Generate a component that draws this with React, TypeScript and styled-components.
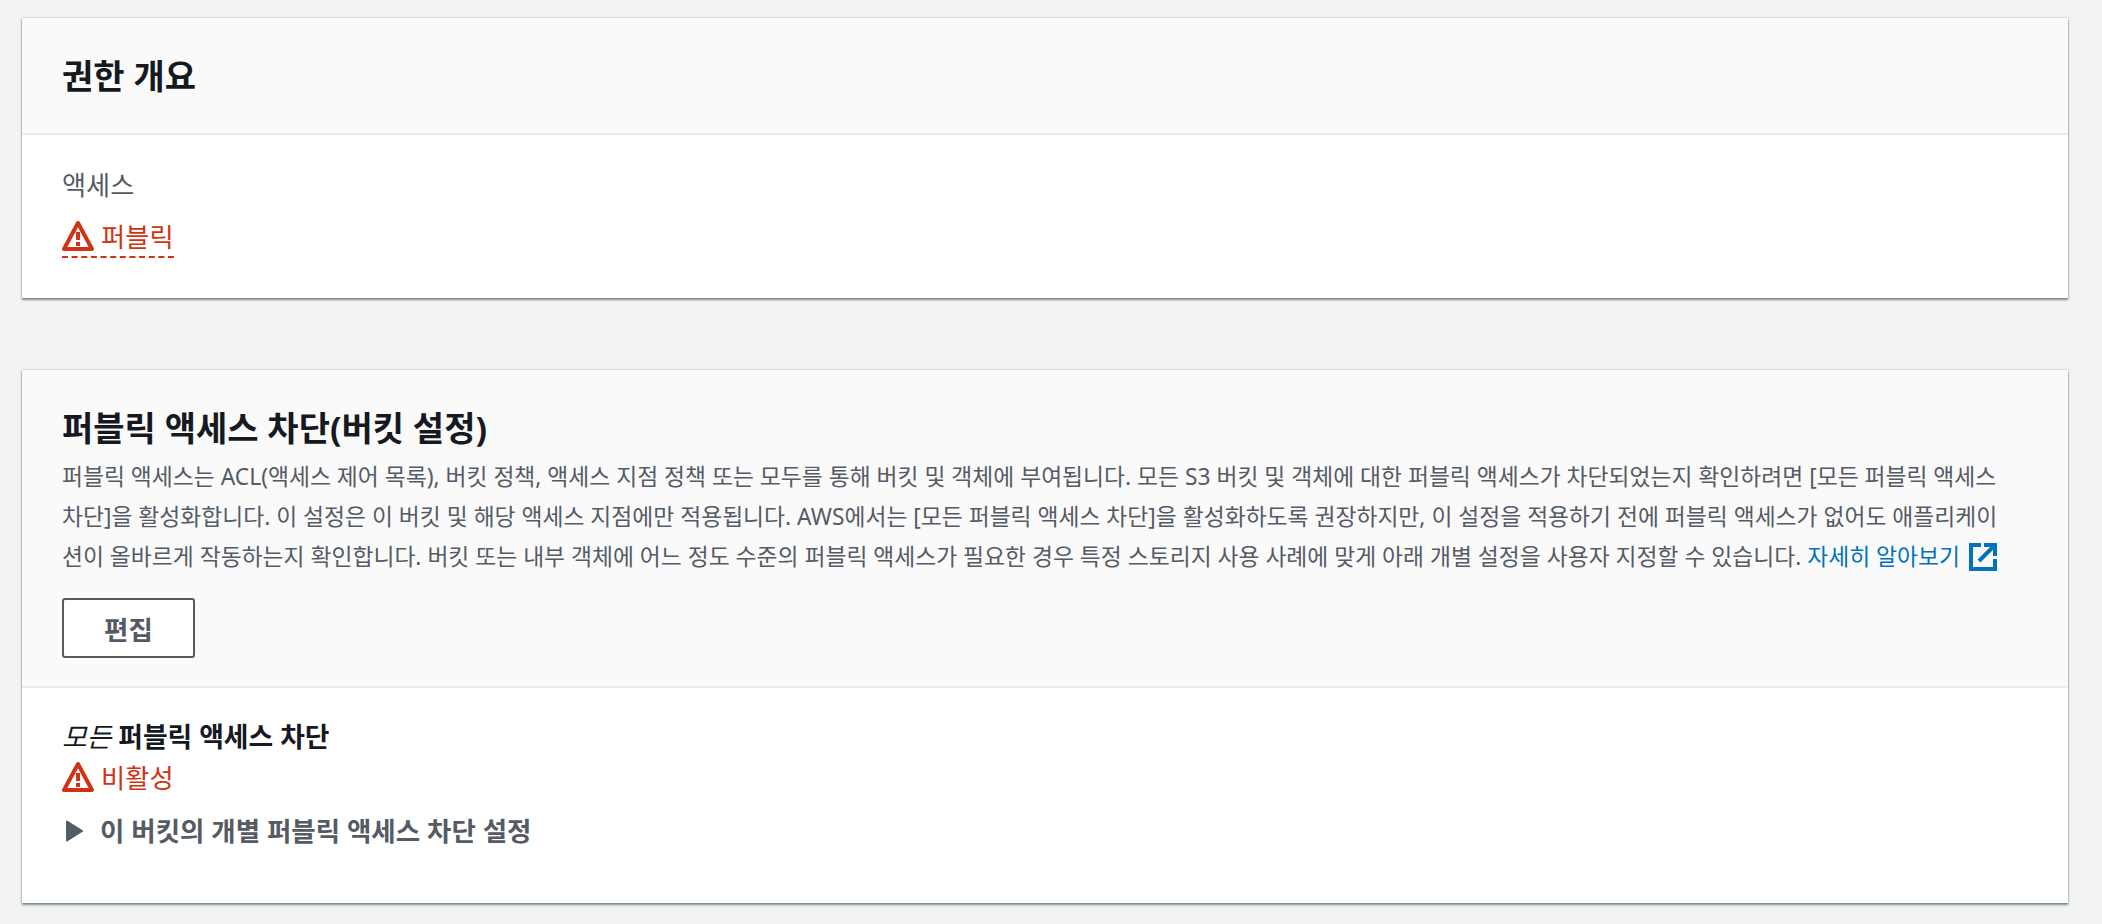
import styled, { createGlobalStyle } from "styled-components";

const GlobalStyle = createGlobalStyle`
    html, body {
        margin: 0;
        padding: 0;
        background-color: #f2f3f3;
    }
    body {
        font-family: "Noto Sans", "Noto Sans CJK KR", sans-serif;
        color: #16191f;
    }
`;

const Page = styled.div`
    display: flex;
    flex-direction: column;
    gap: 72px;
    height: 924px;
    padding: 18px 34px 0 22px;
    box-sizing: border-box;
    overflow: hidden;
`;

const Card = styled.section`
    background-color: #fff;
    box-shadow: 0 2px 2px rgba(0, 28, 36, 0.45), 0 0 2px rgba(0, 28, 36, 0.3);
`;

const Header = styled.header<{ $bottom: string }>`
    background-color: #fafafa;
    border-bottom: 2px solid #eaeded;
    padding: 34px 40px ${(props) => props.$bottom};
`;

const Title = styled.h2`
    margin: 0;
    font-size: 34px;
    line-height: 48px;
    font-weight: 700;
`;

const Description = styled.p`
    margin: 5px 0 0;
    max-width: 1940px;
    font-size: 22.8px;
    line-height: 40px;
    color: #545b64;
`;

const Link = styled.a`
    color: #0073bb;
`;

const EditButton = styled.button`
    display: block;
    width: 133px;
    height: 60px;
    margin-top: 21px;
    padding: 0;
    border: 2px solid #545b64;
    border-radius: 3px;
    background-color: #fff;
    color: #545b64;
    font-family: inherit;
    font-size: 26.5px;
    font-weight: 700;
`;

const Body = styled.div<{ $pad: string }>`
    padding: ${(props) => props.$pad};
`;

const Label = styled.div`
    font-size: 26.2px;
    line-height: 40px;
    color: #545b64;
`;

const Strong = styled.div`
    font-size: 26.8px;
    line-height: 40px;
    font-weight: 700;
    em {
        font-weight: 400;
    }
`;

const StatusRow = styled.div<{ $top: string }>`
    margin-top: ${(props) => props.$top};
`;

const Status = styled.div<{ $dashed?: boolean }>`
    display: inline-flex;
    align-items: center;
    gap: 7px;
    height: 40px;
    font-size: 26.3px;
    color: #d13212;
    border-bottom: ${(props) => (props.$dashed ? "2px dashed #d13212" : "0")};
`;

const StatusText = styled.span`
    margin-top: -2px;
`;

const Disclosure = styled.div`
    display: flex;
    align-items: center;
    gap: 16px;
    margin-top: 13px;
    padding-left: 3px;
    font-size: 26.5px;
    line-height: 40px;
    font-weight: 700;
    color: #545b64;
`;

const Warning = () => (
    <svg width="32" height="32" viewBox="0 0 32 32" fill="none">
        <path d="M16 3 L2 29 H30 Z" stroke="#d13212" strokeWidth="4" strokeLinejoin="round" />
        <rect x="14" y="12" width="4" height="8" fill="#d13212" />
        <rect x="14" y="22" width="4" height="4" fill="#d13212" />
    </svg>
);

const ExternalIcon = styled.svg`
    vertical-align: -6px;
    margin-left: 9px;
`;

const External = () => (
    <ExternalIcon width="28" height="28" viewBox="0 0 28 28" fill="none" stroke="#0073bb" strokeWidth="4">
        <path d="M12 2 H2 V26 H26 V16" />
        <path d="M10 18 L24 4 M15 2 H26 V13" />
    </ExternalIcon>
);

const Caret = () => (
    <svg width="19" height="22" viewBox="0 0 19 22">
        <path d="M2 1.5 L17 11 L2 20.5 Z" fill="#545b64" stroke="#545b64" strokeWidth="2" strokeLinejoin="round" />
    </svg>
);

export default function App() {
    return (
        <Page>
            <GlobalStyle />
            <Card>
                <Header $bottom="33px">
                    <Title>권한 개요</Title>
                </Header>
                <Body $pad="30px 40px 40px">
                    <Label>액세스</Label>
                    <StatusRow $top="11px">
                        <Status $dashed>
                            <Warning />
                            <StatusText>퍼블릭</StatusText>
                        </Status>
                    </StatusRow>
                </Body>
            </Card>
            <Card>
                <Header $bottom="28px">
                    <Title>퍼블릭 액세스 차단(버킷 설정)</Title>
                    <Description>
                        퍼블릭 액세스는 ACL(액세스 제어 목록), 버킷 정책, 액세스 지점 정책 또는 모두를 통해 버킷 및 객체에 부여됩니다. 모든 S3 버킷 및 객체에 대한 퍼블릭 액세스가 차단되었는지 확인하려면 [모든 퍼블릭 액세스 차단]을 활성화합니다. 이 설정은 이 버킷 및 해당 액세스 지점에만 적용됩니다. AWS에서는 [모든 퍼블릭 액세스 차단]을 활성화하도록 권장하지만, 이 설정을 적용하기 전에 퍼블릭 액세스가 없어도 애플리케이션이 올바르게 작동하는지 확인합니다. 버킷 또는 내부 객체에 어느 정도 수준의 퍼블릭 액세스가 필요한 경우 특정 스토리지 사용 사례에 맞게 아래 개별 설정을 사용자 지정할 수 있습니다.{" "}
                        <Link>자세히 알아보기</Link>
                        <External />
                    </Description>
                    <EditButton>편집</EditButton>
                </Header>
                <Body $pad="29px 40px 52px">
                    <Strong>
                        <em>모든</em> 퍼블릭 액세스 차단
                    </Strong>
                    <Status>
                        <Warning />
                        <StatusText>비활성</StatusText>
                    </Status>
                    <Disclosure>
                        <Caret />이 버킷의 개별 퍼블릭 액세스 차단 설정
                    </Disclosure>
                </Body>
            </Card>
        </Page>
    );
}
